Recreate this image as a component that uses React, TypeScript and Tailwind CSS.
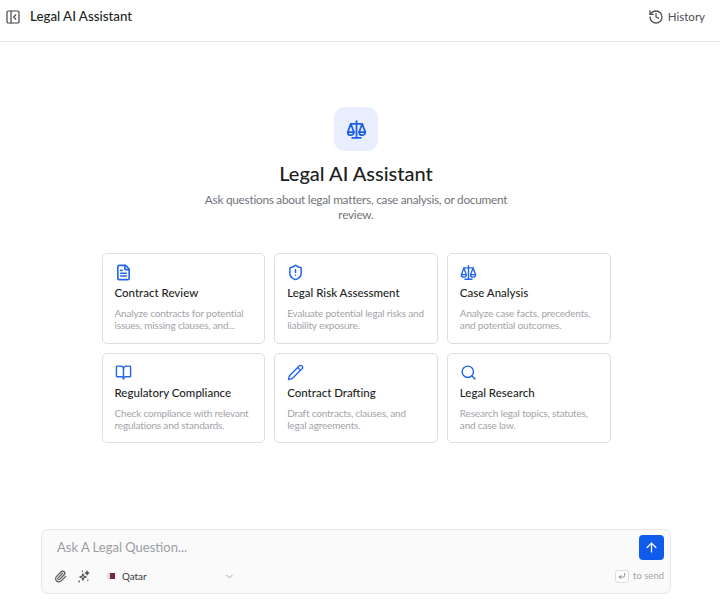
import { ArrowUp, BookOpen, ChevronDown, CornerDownLeft, FileText, History, Paperclip, Pencil, PanelLeftClose, Search, ShieldAlert } from "lucide-react";

// lucide's scale is too flat, this one has the tall closed pans of the design
const ScaleIcon = ({ className = "", strokeWidth = 2 }: { className?: string; strokeWidth?: number }) => (
  <svg viewBox="0 0 24 24" fill="none" stroke="currentColor" strokeWidth={strokeWidth} strokeLinecap="round" strokeLinejoin="round" className={className}>
    <path d="M12 2.5V21" />
    <path d="M7 21.5h10" />
    <path d="M5.5 5.5h13" />
    <path d="M5.5 5.5 2 15h7z" />
    <path d="M2 15a3.5 3.5 0 0 0 7 0" />
    <path d="M18.5 5.5 15 15h7z" />
    <path d="M15 15a3.5 3.5 0 0 0 7 0" />
  </svg>
);

const SparkIcon = ({ className = "" }: { className?: string }) => (
  <svg viewBox="0 0 24 24" fill="none" stroke="currentColor" strokeWidth={2.2} strokeLinejoin="round" className={className}>
    <path d="M11 7l1.6 4.4L17 13l-4.4 1.6L11 19l-1.6-4.4L5 13l4.4-1.6z" />
    <path d="M18.5 2l.9 2.6L22 5.5l-2.6.9-.9 2.6-.9-2.6L15 5.5l2.6-.9z" fill="currentColor" />
    <circle cx="4" cy="21" r="1.6" fill="currentColor" stroke="none" />
    <circle cx="10" cy="2.5" r="1.4" fill="currentColor" stroke="none" />
    <circle cx="20" cy="19" r="1.4" fill="currentColor" stroke="none" />
  </svg>
);

const cards = [
  { icon: FileText, sw: 2.3, title: "Contract Review", text: "Analyze contracts for potential issues, missing clauses, and..." },
  { icon: ShieldAlert, sw: 2.1, title: "Legal Risk Assessment", text: "Evaluate potential legal risks and liability exposure." },
  { icon: ScaleIcon, sw: 2, title: "Case Analysis", text: "Analyze case facts, precedents, and potential outcomes." },
  { icon: BookOpen, sw: 2, title: "Regulatory Compliance", text: "Check compliance with relevant regulations and standards." },
  { icon: Pencil, sw: 1.9, title: "Contract Drafting", text: "Draft contracts, clauses, and legal agreements." },
  { icon: Search, sw: 2, title: "Legal Research", text: "Research legal topics, statutes, and case law." },
];

const App = () => {
  return (
    <div className="flex h-[603px] w-[720px] flex-col overflow-hidden bg-white font-['Lato',sans-serif] text-[#1d1f23]">
      {/* Header */}
      <header className="flex h-[42px] shrink-0 items-center justify-between border-b border-[#e9e9e9] pb-[8px] pl-[5px] pr-[15px]">
        <div className="flex items-center gap-[9px]">
          <PanelLeftClose className="h-[16px] w-[16px] text-[#44474d]" strokeWidth={1.8} />
          <span className="text-[13.3px] font-medium">Legal AI Assistant</span>
        </div>
        <div className="flex items-center gap-[4px] text-[#4b4e54]">
          <History className="h-[16px] w-[16px]" strokeWidth={1.9} />
          <span className="text-[11.5px]">History</span>
        </div>
      </header>

      <main className="flex w-[712px] flex-1 flex-col items-center pt-[65px]">
        <div className="flex h-[44px] w-[44px] items-center justify-center rounded-[11px] bg-[#e8eefd]">
          <ScaleIcon className="h-[21px] w-[21px] text-[#1a5fe8]" strokeWidth={2} />
        </div>
        <h1 className="mt-[9px] text-[20px] font-medium leading-[26px]">Legal AI Assistant</h1>
        <p className="mt-[6px] w-[320px] text-center text-[11.8px] leading-[15px] tracking-[-0.25px] text-[#71747a]">
          Ask questions about legal matters, case analysis, or document review.
        </p>

        <div className="mt-[31px] grid w-[509px] grid-cols-3 gap-[9px]">
          {cards.map((card) => (
            <div key={card.title} className="h-[90.5px] rounded-[5px] border border-[#dedede] px-[12px] pt-[10px]">
              <card.icon className="h-[17px] w-[17px] text-[#2264ea]" strokeWidth={card.sw} />
              <h3 className="mt-[3px] text-[11.5px] font-medium leading-[18px]">{card.title}</h3>
              <p className="mt-[5px] text-[10px] leading-[12px] tracking-[-0.17px] text-[#a2a4a8]">{card.text}</p>
            </div>
          ))}
        </div>
      </main>

      {/* Input */}
      <div className="mb-[9px] ml-[41px] h-[65px] w-[630px] shrink-0 rounded-[7px] border border-[#e8e8e8] bg-[#fafafa] pl-[12px] pr-[6px] pt-[5px]">
        <div className="flex items-center justify-between">
          <span className="pl-[3px] text-[13px] text-[#9c9ea2]">Ask A Legal Question...</span>
          <button className="flex h-[25px] w-[25px] items-center justify-center rounded-[4px] bg-[#0f5bec]">
            <ArrowUp className="h-[15px] w-[15px] text-white" strokeWidth={2} />
          </button>
        </div>
        <div className="mt-[9px] flex items-center">
          <Paperclip className="h-[13px] w-[13px] text-[#55585d]" strokeWidth={2.2} />
          <SparkIcon className="ml-[10px] h-[13px] w-[13px] text-[#55585d]" />
          <div className="ml-[17px] flex w-[128px] items-center">
            <div className="flex h-[6px] w-[8px] overflow-hidden">
              <div className="w-[3px] bg-[#e4e0e0]" />
              <div className="flex-1 bg-[#7d2248]" />
            </div>
            <span className="ml-[7px] text-[9.8px] text-[#33363b]">Qatar</span>
            <ChevronDown className="ml-auto h-[11px] w-[11px] text-[#8c8e92]" strokeWidth={1.7} />
          </div>
          <div className="ml-auto flex items-center gap-[4px]">
            <span className="flex h-[13px] w-[14px] items-center justify-center rounded-[3px] border border-[#dddddd] bg-white">
              <CornerDownLeft className="h-[8px] w-[8px] text-[#55585d]" strokeWidth={2} />
            </span>
            <span className="text-[9.5px] text-[#a2a4a8]">to send</span>
          </div>
        </div>
      </div>
    </div>
  );
};

export default App;
